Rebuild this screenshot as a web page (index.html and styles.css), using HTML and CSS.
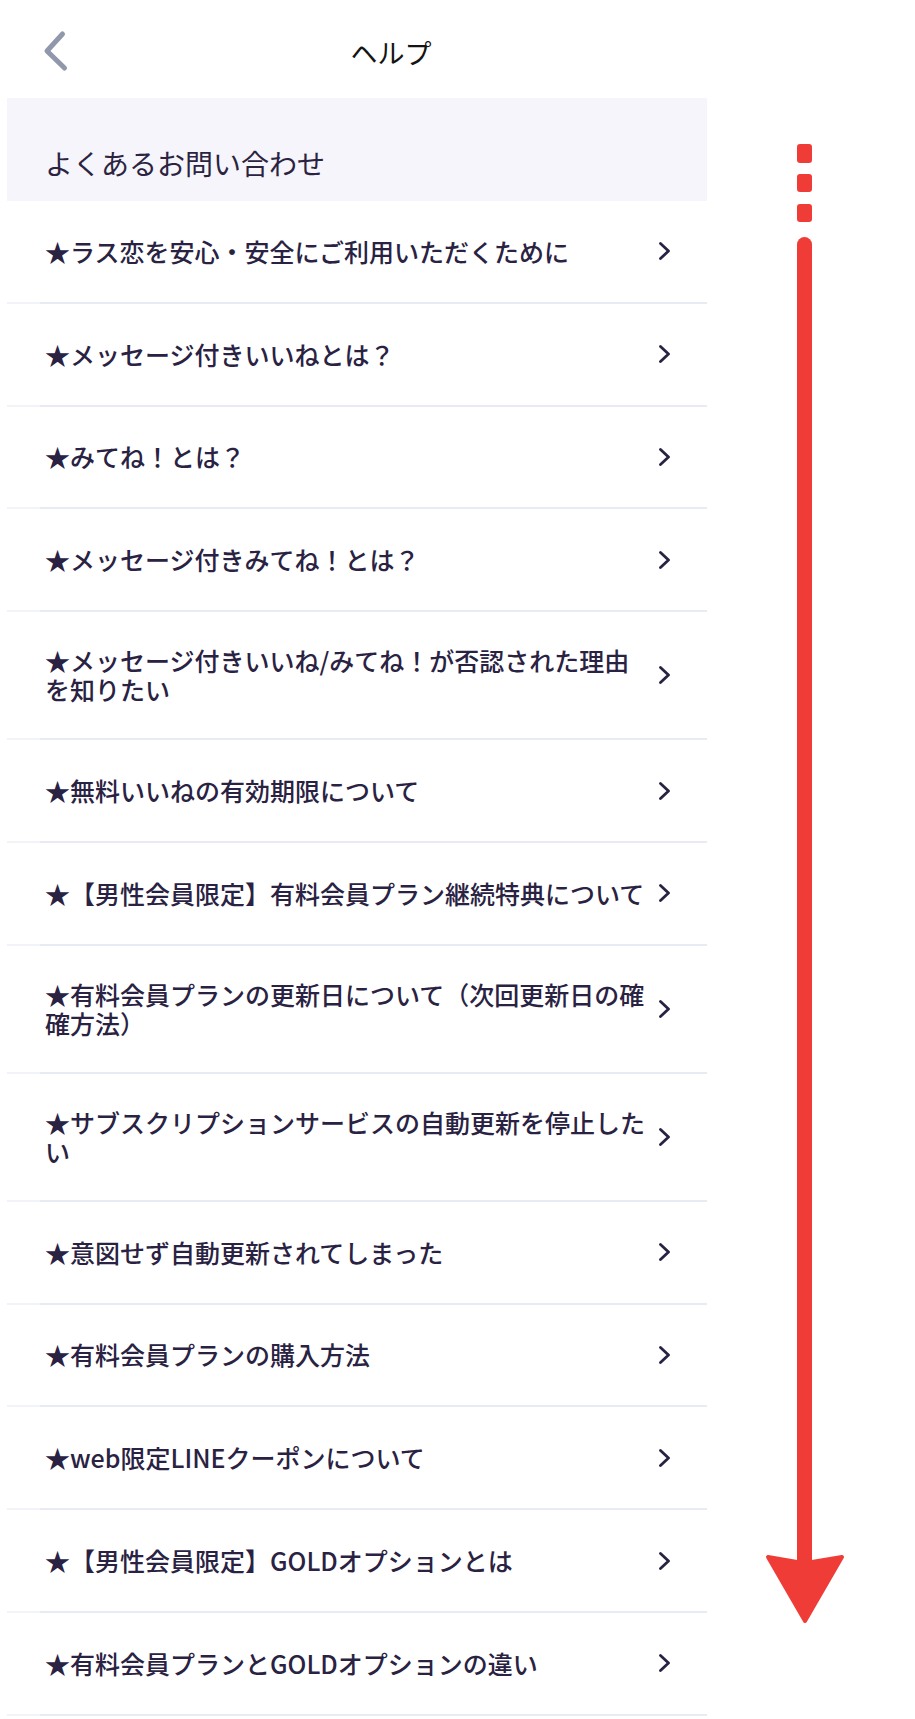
FILE: index.html
```html
<!DOCTYPE html>
<html lang="ja">
<head>
    <meta charset="UTF-8">
    <meta name="viewport" content="width=device-width, initial-scale=1.0">
    <title>ヘルプ</title>
    <link rel="stylesheet" href="styles.css">
</head>
<body>
    <div class="screen">
        <header class="top-bar">
            <a class="back-btn" href="#" aria-label="戻る">
                <svg width="30" height="46" viewBox="0 0 30 46">
                    <path d="M21.5 5 L6 22 L23.5 39" fill="none" stroke="#9298ab" stroke-width="5" stroke-linecap="round" stroke-linejoin="round"/>
                </svg>
            </a>
            <h1 class="page-title">ヘルプ</h1>
            <span></span>
        </header>

        <section class="faq">
            <h2 class="faq-heading">よくあるお問い合わせ</h2>
            <ul class="faq-list">
                <li class="faq-item"><a class="faq-link" href="#"><span class="faq-text">★ラス恋を安心・安全にご利用いただくために</span><svg class="chevron" width="12" height="18" viewBox="0 0 12 18"><path d="M1.5 1.5 L9.5 9 L1.5 16.5"/></svg></a></li>
                <li class="faq-item"><a class="faq-link" href="#"><span class="faq-text">★メッセージ付きいいねとは？</span><svg class="chevron" width="12" height="18" viewBox="0 0 12 18"><path d="M1.5 1.5 L9.5 9 L1.5 16.5"/></svg></a></li>
                <li class="faq-item"><a class="faq-link" href="#"><span class="faq-text">★みてね！とは？</span><svg class="chevron" width="12" height="18" viewBox="0 0 12 18"><path d="M1.5 1.5 L9.5 9 L1.5 16.5"/></svg></a></li>
                <li class="faq-item"><a class="faq-link" href="#"><span class="faq-text">★メッセージ付きみてね！とは？</span><svg class="chevron" width="12" height="18" viewBox="0 0 12 18"><path d="M1.5 1.5 L9.5 9 L1.5 16.5"/></svg></a></li>
                <li class="faq-item"><a class="faq-link" href="#"><span class="faq-text">★メッセージ付きいいね/みてね！が否認された理由を知りたい</span><svg class="chevron" width="12" height="18" viewBox="0 0 12 18"><path d="M1.5 1.5 L9.5 9 L1.5 16.5"/></svg></a></li>
                <li class="faq-item"><a class="faq-link" href="#"><span class="faq-text">★無料いいねの有効期限について</span><svg class="chevron" width="12" height="18" viewBox="0 0 12 18"><path d="M1.5 1.5 L9.5 9 L1.5 16.5"/></svg></a></li>
                <li class="faq-item"><a class="faq-link" href="#"><span class="faq-text">★【男性会員限定】有料会員プラン継続特典について</span><svg class="chevron" width="12" height="18" viewBox="0 0 12 18"><path d="M1.5 1.5 L9.5 9 L1.5 16.5"/></svg></a></li>
                <li class="faq-item"><a class="faq-link" href="#"><span class="faq-text">★有料会員プランの更新日について（次回更新日の確確方法）</span><svg class="chevron" width="12" height="18" viewBox="0 0 12 18"><path d="M1.5 1.5 L9.5 9 L1.5 16.5"/></svg></a></li>
                <li class="faq-item"><a class="faq-link" href="#"><span class="faq-text">★サブスクリプションサービスの自動更新を停止したい</span><svg class="chevron" width="12" height="18" viewBox="0 0 12 18"><path d="M1.5 1.5 L9.5 9 L1.5 16.5"/></svg></a></li>
                <li class="faq-item"><a class="faq-link" href="#"><span class="faq-text">★意図せず自動更新されてしまった</span><svg class="chevron" width="12" height="18" viewBox="0 0 12 18"><path d="M1.5 1.5 L9.5 9 L1.5 16.5"/></svg></a></li>
                <li class="faq-item"><a class="faq-link" href="#"><span class="faq-text">★有料会員プランの購入方法</span><svg class="chevron" width="12" height="18" viewBox="0 0 12 18"><path d="M1.5 1.5 L9.5 9 L1.5 16.5"/></svg></a></li>
                <li class="faq-item"><a class="faq-link" href="#"><span class="faq-text">★web限定LINEクーポンについて</span><svg class="chevron" width="12" height="18" viewBox="0 0 12 18"><path d="M1.5 1.5 L9.5 9 L1.5 16.5"/></svg></a></li>
                <li class="faq-item"><a class="faq-link" href="#"><span class="faq-text">★【男性会員限定】GOLDオプションとは</span><svg class="chevron" width="12" height="18" viewBox="0 0 12 18"><path d="M1.5 1.5 L9.5 9 L1.5 16.5"/></svg></a></li>
                <li class="faq-item"><a class="faq-link" href="#"><span class="faq-text">★有料会員プランとGOLDオプションの違い</span><svg class="chevron" width="12" height="18" viewBox="0 0 12 18"><path d="M1.5 1.5 L9.5 9 L1.5 16.5"/></svg></a></li>
            </ul>
        </section>
    </div>

    <!-- flèche rouge : indication de défilement -->
    <svg class="scroll-arrow" width="90" height="1490" viewBox="0 0 90 1490">
        <rect x="37" y="4" width="15" height="19" rx="3"/>
        <rect x="37" y="34" width="15" height="18" rx="3"/>
        <rect x="37" y="64" width="15" height="18" rx="3"/>
        <rect x="37" y="97" width="15" height="1330" rx="7.5"/>
        <polygon points="8,1417 37,1422 52,1422 82,1417 45,1481" stroke="#ef3c36" stroke-width="4" stroke-linejoin="round"/>
    </svg>
</body>
</html>
```

FILE: styles.css
```css
body {
    margin: 0;
    padding: 0;
    background-color: #ffffff;
    font-family: "Noto Sans CJK JP", "Noto Sans", sans-serif;
    color: #2a2242;
    position: relative;
    width: 915px;
    min-height: 1719px;
}

.screen {
    width: 782px;
}

.top-bar {
    display: grid;
    grid-template-columns: 1fr auto 1fr;
    align-items: center;
    height: 98px;
    padding-top: 6px;
    box-sizing: border-box;
}

.back-btn {
    display: flex;
    padding-left: 41px;
}

.page-title {
    margin: 0;
    font-size: 27px;
    font-weight: 400;
    color: #141414;
    line-height: 1;
}

.faq {
    margin-left: 7px;
    width: 700px;
}

.faq-heading {
    margin: 0;
    background-color: #f5f5fb;
    padding: 51px 38px 24px;
    font-size: 28px;
    line-height: 28px;
    font-weight: 400;
    color: #2b2340;
}

.faq-list {
    list-style: none;
    margin: 0;
    padding: 0;
}

.faq-item {
    padding-bottom: 2px;
    background: linear-gradient(to right, #f2f3f8 33px, #e8ebf4 33px) left bottom / 100% 2px no-repeat;
}

.faq-link {
    display: flex;
    align-items: center;
    gap: 10px;
    min-height: 100.8px;
    box-sizing: border-box;
    padding: 34px 36px 34px 38px;
    text-decoration: none;
    color: inherit;
}

.faq-text {
    flex: 1;
    font-size: 25px;
    line-height: 29px;
    font-weight: 500;
}

.chevron {
    flex: none;
}

.chevron path {
    fill: none;
    stroke: #2a2242;
    stroke-width: 2.8;
    stroke-linecap: round;
    stroke-linejoin: round;
}

.scroll-arrow {
    position: absolute;
    left: 760px;
    top: 140px;
    fill: #ef3c36;
}
```
